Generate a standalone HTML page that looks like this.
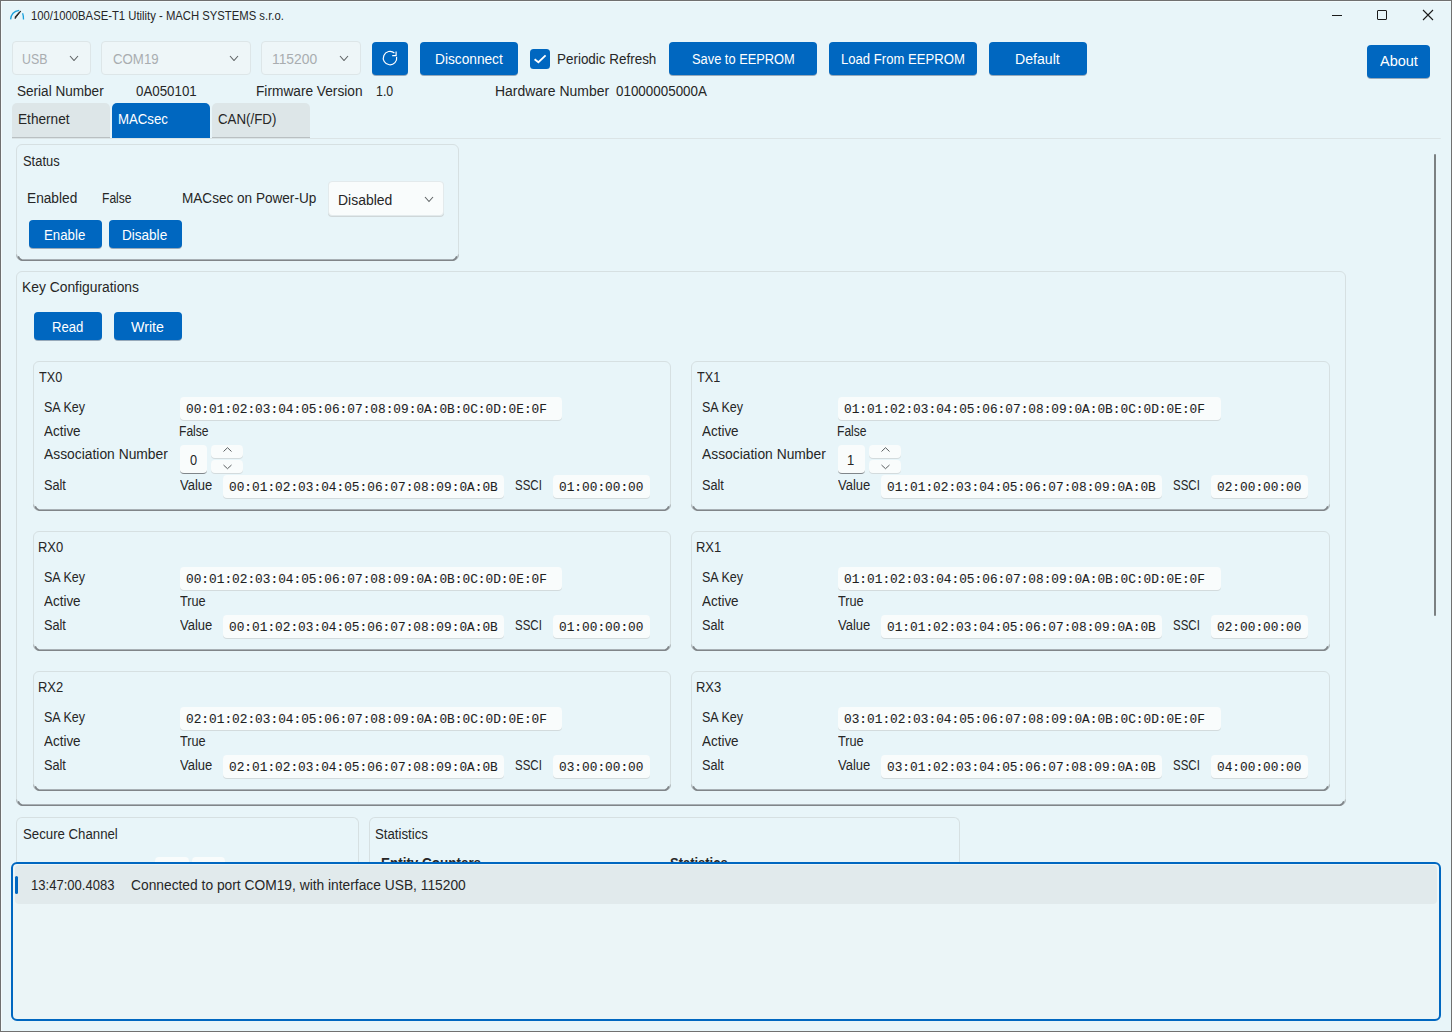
<!DOCTYPE html><html><head><meta charset="utf-8"><style>
*{box-sizing:border-box;margin:0;padding:0}
html,body{width:1452px;height:1032px;overflow:hidden}
body{background:#e8f5f9;font-family:"Liberation Sans",sans-serif;font-size:14px;color:#262626;position:relative}
.a{position:absolute;white-space:nowrap}
.win{position:absolute;left:0;top:0;width:1452px;height:1032px;border:1px solid #707070;box-shadow:inset 1px 1px 0 #f3fbfd}
.t{position:absolute;white-space:nowrap;line-height:16px}
.btn{position:absolute;background:#0067c0;color:#fff;border-radius:4px;box-shadow:0 1px 0 rgba(0,30,70,.35)}
.btn span{position:absolute;left:0;right:0;text-align:center;line-height:16px}
.combo{position:absolute;border:1px solid #dde6e8;border-radius:4px;background:#eef6f8;color:#a0a5a7}
.grp{position:absolute;border:1px solid #d6e0e2;border-radius:6px}
.grp2{position:absolute;border:1px solid #d6e0e2;border-radius:6px;border-bottom:none}
.tb{position:absolute;background:#f9fcfc;border-radius:4px;box-shadow:0 1px 0 #d3dbdd}
.mono{position:absolute;white-space:nowrap;font-family:"Liberation Mono",monospace;font-size:12.8px;line-height:14px;color:#1f1f1f;-webkit-text-stroke:0.1px #1f1f1f}
</style></head><body>
<div class="win"></div>
<svg class="a" style="left:0;top:0" width="30" height="25" viewBox="0 0 30 25">
  <path d="M10.6 19.4 Q11.2 11.4 19.2 10.3" stroke="#1ba1dc" stroke-width="1.35" fill="none"/>
  <path d="M22.6 13.2 Q23.6 15.8 23.5 19.6" stroke="#1ba1dc" stroke-width="1.3" fill="none"/>
  <path d="M15.2 18.6 L16.6 16.6 L20.8 11.2 L19.6 11.8 L15.2 16.8 Z" fill="#1f1f1f" stroke="#1f1f1f" stroke-width="0.9"/>
</svg>
<div class="t" style="left:31.00px;top:7.84px;font-size:12px;transform:scaleX(0.9407);transform-origin:0 0">100/1000BASE-T1 Utility - MACH SYSTEMS s.r.o.</div>
<div class="a" style="left:1332px;top:15px;width:10px;height:1px;background:#1b1b1b"></div>
<div class="a" style="left:1377px;top:10px;width:10px;height:10px;border:1px solid #1b1b1b;border-radius:1px"></div>
<svg class="a" style="left:1422px;top:9px" width="12" height="12" viewBox="0 0 12 12"><path d="M1 1L11 11M11 1L1 11" stroke="#1b1b1b" stroke-width="1.1"/></svg>
<div class="combo" style="left:12px;top:41px;width:79px;height:34px;"></div>
<div class="t" style="left:21.72px;top:51.45px;color:#a9adb0;transform:scaleX(0.8817);transform-origin:0 0">USB</div>
<svg class="a" style="left:69.0px;top:54.8px" width="10" height="6.5"><path d="M1 1 L5.0 5.5 L9 1" stroke="#606466" stroke-width="1.1" fill="none"/></svg>
<div class="combo" style="left:101px;top:41px;width:150px;height:34px;"></div>
<div class="t" style="left:112.50px;top:51.45px;color:#a9adb0;transform:scaleX(0.9453);transform-origin:0 0">COM19</div>
<svg class="a" style="left:229.0px;top:54.8px" width="10" height="6.5"><path d="M1 1 L5.0 5.5 L9 1" stroke="#606466" stroke-width="1.1" fill="none"/></svg>
<div class="combo" style="left:261px;top:41px;width:100px;height:34px;"></div>
<div class="t" style="left:271.81px;top:51.45px;color:#a9adb0;transform:scaleX(0.9890);transform-origin:0 0">115200</div>
<svg class="a" style="left:339.0px;top:54.8px" width="10" height="6.5"><path d="M1 1 L5.0 5.5 L9 1" stroke="#606466" stroke-width="1.1" fill="none"/></svg>
<div class="btn" style="left:372px;top:42px;width:36px;height:33px"></div>
<svg class="a" style="left:380px;top:48px" width="20" height="20" viewBox="0 0 20 20">
<path d="M14.4 5.0 A6.7 6.7 0 1 0 16.6 8.8" stroke="#fff" stroke-width="1.2" fill="none"/>
<path d="M12.2 7.6 L16.1 7.6 L16.1 3.6" stroke="#fff" stroke-width="1.2" fill="none"/></svg>
<div class="btn" style="left:420px;top:42px;width:98px;height:33px"></div>
<div class="t" style="left:434.57px;top:50.65px;color:#fff;transform:scaleX(0.9786);transform-origin:0 0">Disconnect</div>
<div class="a" style="left:530px;top:49px;width:20px;height:20px;background:#0067c0;border-radius:3.5px"></div>
<svg class="a" style="left:530px;top:49px" width="20" height="20"><path d="M4.6 10.2 L8.4 13.2 L15.6 6.4" stroke="#fff" stroke-width="1.8" fill="none"/></svg>
<div class="t" style="left:557.04px;top:51.15px;transform:scaleX(0.9597);transform-origin:0 0">Periodic Refresh</div>
<div class="btn" style="left:669px;top:42px;width:148px;height:33px"></div>
<div class="t" style="left:691.90px;top:50.65px;color:#fff;transform:scaleX(0.9176);transform-origin:0 0">Save to EEPROM</div>
<div class="btn" style="left:829px;top:42px;width:148px;height:33px"></div>
<div class="t" style="left:840.91px;top:50.65px;color:#fff;transform:scaleX(0.9364);transform-origin:0 0">Load From EEPROM</div>
<div class="btn" style="left:989px;top:42px;width:98px;height:33px"></div>
<div class="t" style="left:1015.09px;top:50.65px;color:#fff;transform:scaleX(1.0076);transform-origin:0 0">Default</div>
<div class="btn" style="left:1367px;top:45px;width:63px;height:33px"></div>
<div class="t" style="left:1379.50px;top:53.15px;color:#fff;transform:scaleX(1.0355);transform-origin:0 0">About</div>
<div class="t" style="left:16.50px;top:83.15px;transform:scaleX(0.9687);transform-origin:0 0">Serial Number</div>
<div class="t" style="left:136.10px;top:83.15px;transform:scaleX(0.9508);transform-origin:0 0">0A050101</div>
<div class="t" style="left:255.52px;top:83.15px;transform:scaleX(0.9782);transform-origin:0 0">Firmware Version</div>
<div class="t" style="left:376.32px;top:83.15px;transform:scaleX(0.8835);transform-origin:0 0">1.0</div>
<div class="t" style="left:495.20px;top:83.15px;transform:scaleX(0.9973);transform-origin:0 0">Hardware Number</div>
<div class="t" style="left:616.20px;top:83.15px;transform:scaleX(0.9577);transform-origin:0 0">01000005000A</div>
<div class="a" style="left:12px;top:138px;width:1429px;height:1px;background:#dbe4e6;border-radius:0 3px 0 0"></div>
<div class="a" style="left:12px;top:103px;width:98px;height:35px;background:#dde6e8;border-radius:5px 5px 0 0;border-bottom:1px solid #b9c0c2"></div>
<div class="t" style="left:17.73px;top:111.15px;transform:scaleX(0.9744);transform-origin:0 0">Ethernet</div>
<div class="a" style="left:112px;top:103px;width:98px;height:35px;background:#0067c0;border-radius:5px 5px 0 0"></div>
<div class="t" style="left:117.66px;top:111.15px;color:#fff;transform:scaleX(0.9442);transform-origin:0 0">MACsec</div>
<div class="a" style="left:212px;top:103px;width:98px;height:35px;background:#dde6e8;border-radius:5px 5px 0 0;border-bottom:1px solid #b9c0c2"></div>
<div class="t" style="left:218.40px;top:111.15px;transform:scaleX(0.9494);transform-origin:0 0">CAN(/FD)</div>
<div class="a" style="left:1434px;top:154px;width:2px;height:462px;background:#7b8082;border-radius:1px"></div>
<div class="grp" style="left:16px;top:144px;width:443px;height:117px;"></div>
<svg class="a" style="left:16px;top:252px" width="443" height="9"><path d="M2.22 4.22 A5.6 5.6 0 0 0 6.20 8.20 L436.80 8.20 A5.6 5.6 0 0 0 440.78 4.22" stroke="#80868a" stroke-width="1.6" fill="none"/><path d="M0.6 2.60 A5.6 5.6 0 0 0 6.20 8.20 L436.80 8.20 A5.6 5.6 0 0 0 442.40 2.60" stroke="#80868a" stroke-opacity="0.45" stroke-width="1.2" fill="none"/></svg>
<div class="t" style="left:23.00px;top:153.15px;transform:scaleX(0.9222);transform-origin:0 0">Status</div>
<div class="t" style="left:27.02px;top:190.15px;transform:scaleX(0.9780);transform-origin:0 0">Enabled</div>
<div class="t" style="left:102.14px;top:190.15px;transform:scaleX(0.8640);transform-origin:0 0">False</div>
<div class="t" style="left:182.03px;top:190.15px;transform:scaleX(0.9695);transform-origin:0 0">MACsec on Power-Up</div>
<div class="tb" style="left:328px;top:181px;width:116px;height:35px;background:#f9fcfc;border:1px solid #e3eaec;box-shadow:0 1px 0 #cfd7d9"></div>
<div class="t" style="left:338.00px;top:192.15px;transform:scaleX(0.9964);transform-origin:0 0">Disabled</div>
<svg class="a" style="left:424.0px;top:196.2px" width="10" height="6.5"><path d="M1 1 L5.0 5.5 L9 1" stroke="#606466" stroke-width="1.1" fill="none"/></svg>
<div class="btn" style="left:29px;top:220px;width:73px;height:28px"></div>
<div class="t" style="left:44.30px;top:226.65px;color:#fff;transform:scaleX(0.9461);transform-origin:0 0">Enable</div>
<div class="btn" style="left:109px;top:220px;width:73px;height:28px"></div>
<div class="t" style="left:122.33px;top:226.65px;color:#fff;transform:scaleX(0.9673);transform-origin:0 0">Disable</div>
<div class="grp" style="left:16px;top:271px;width:1330px;height:535px;"></div>
<svg class="a" style="left:16px;top:797px" width="1330" height="9"><path d="M2.22 4.22 A5.6 5.6 0 0 0 6.20 8.20 L1323.80 8.20 A5.6 5.6 0 0 0 1327.78 4.22" stroke="#80868a" stroke-width="1.6" fill="none"/><path d="M0.6 2.60 A5.6 5.6 0 0 0 6.20 8.20 L1323.80 8.20 A5.6 5.6 0 0 0 1329.40 2.60" stroke="#80868a" stroke-opacity="0.45" stroke-width="1.2" fill="none"/></svg>
<div class="t" style="left:22.01px;top:278.65px;transform:scaleX(0.9890);transform-origin:0 0">Key Configurations</div>
<div class="btn" style="left:34px;top:312px;width:68px;height:28px"></div>
<div class="t" style="left:52.21px;top:319.15px;color:#fff;transform:scaleX(0.9374);transform-origin:0 0">Read</div>
<div class="btn" style="left:114px;top:312px;width:68px;height:28px"></div>
<div class="t" style="left:131.45px;top:319.15px;color:#fff;transform:scaleX(1.0146);transform-origin:0 0">Write</div>
<div class="grp" style="left:33px;top:361px;width:638px;height:150px;"></div>
<svg class="a" style="left:33px;top:502px" width="638" height="9"><path d="M2.22 4.22 A5.6 5.6 0 0 0 6.20 8.20 L631.80 8.20 A5.6 5.6 0 0 0 635.78 4.22" stroke="#80868a" stroke-width="1.6" fill="none"/><path d="M0.6 2.60 A5.6 5.6 0 0 0 6.20 8.20 L631.80 8.20 A5.6 5.6 0 0 0 637.40 2.60" stroke="#80868a" stroke-opacity="0.45" stroke-width="1.2" fill="none"/></svg>
<div class="t" style="left:39.00px;top:369.15px;transform:scaleX(0.9038);transform-origin:0 0">TX0</div>
<div class="t" style="left:44.00px;top:399.15px;transform:scaleX(0.8931);transform-origin:0 0">SA Key</div>
<div class="tb" style="left:180px;top:397px;width:382px;height:23px;"></div>
<div class="mono" style="left:186px;top:402.59px">00:01:02:03:04:05:06:07:08:09:0A:0B:0C:0D:0E:0F</div>
<div class="t" style="left:44.00px;top:423.15px;transform:scaleX(0.9599);transform-origin:0 0">Active</div>
<div class="t" style="left:179.14px;top:423.15px;transform:scaleX(0.8640);transform-origin:0 0">False</div>
<div class="t" style="left:44.00px;top:446.15px;transform:scaleX(0.9887);transform-origin:0 0">Association Number</div>
<div class="tb" style="left:180px;top:445px;width:27px;height:29px;border-bottom:1px solid #80868a;box-shadow:none"></div>
<div class="t" style="left:190.00px;top:452.15px;transform:scaleX(0.9125);transform-origin:0 0">0</div>
<div class="tb" style="left:211px;top:445px;width:32px;height:13px;"></div>
<div class="tb" style="left:211px;top:460px;width:32px;height:13px;"></div>
<svg class="a" style="left:222.5px;top:447px" width="9" height="6"><path d="M0.5 4.5 L4.5 0.7 L8.5 4.5" stroke="#5a5e60" stroke-width="1" fill="none"/></svg>
<svg class="a" style="left:222.5px;top:464px" width="9" height="6"><path d="M0.5 1 L4.5 4.7 L8.5 1" stroke="#5a5e60" stroke-width="1" fill="none"/></svg>
<div class="t" style="left:44.00px;top:477.15px;transform:scaleX(0.9078);transform-origin:0 0">Salt</div>
<div class="t" style="left:180.00px;top:477.15px;transform:scaleX(0.9291);transform-origin:0 0">Value</div>
<div class="tb" style="left:223px;top:475px;width:281px;height:23px;"></div>
<div class="mono" style="left:229px;top:480.59px">00:01:02:03:04:05:06:07:08:09:0A:0B</div>
<div class="t" style="left:515.00px;top:477.15px;transform:scaleX(0.8211);transform-origin:0 0">SSCI</div>
<div class="tb" style="left:553px;top:475px;width:97px;height:23px;"></div>
<div class="mono" style="left:559px;top:480.59px">01:00:00:00</div>
<div class="grp" style="left:691px;top:361px;width:639px;height:150px;"></div>
<svg class="a" style="left:691px;top:502px" width="639" height="9"><path d="M2.22 4.22 A5.6 5.6 0 0 0 6.20 8.20 L632.80 8.20 A5.6 5.6 0 0 0 636.78 4.22" stroke="#80868a" stroke-width="1.6" fill="none"/><path d="M0.6 2.60 A5.6 5.6 0 0 0 6.20 8.20 L632.80 8.20 A5.6 5.6 0 0 0 638.40 2.60" stroke="#80868a" stroke-opacity="0.45" stroke-width="1.2" fill="none"/></svg>
<div class="t" style="left:697.00px;top:369.15px;transform:scaleX(0.9038);transform-origin:0 0">TX1</div>
<div class="t" style="left:702.00px;top:399.15px;transform:scaleX(0.8931);transform-origin:0 0">SA Key</div>
<div class="tb" style="left:838px;top:397px;width:383px;height:23px;"></div>
<div class="mono" style="left:844px;top:402.59px">01:01:02:03:04:05:06:07:08:09:0A:0B:0C:0D:0E:0F</div>
<div class="t" style="left:702.00px;top:423.15px;transform:scaleX(0.9599);transform-origin:0 0">Active</div>
<div class="t" style="left:837.14px;top:423.15px;transform:scaleX(0.8640);transform-origin:0 0">False</div>
<div class="t" style="left:702.00px;top:446.15px;transform:scaleX(0.9887);transform-origin:0 0">Association Number</div>
<div class="tb" style="left:838px;top:445px;width:27px;height:29px;border-bottom:1px solid #80868a;box-shadow:none"></div>
<div class="t" style="left:847.07px;top:452.15px;transform:scaleX(0.9286);transform-origin:0 0">1</div>
<div class="tb" style="left:869px;top:445px;width:32px;height:13px;"></div>
<div class="tb" style="left:869px;top:460px;width:32px;height:13px;"></div>
<svg class="a" style="left:880.5px;top:447px" width="9" height="6"><path d="M0.5 4.5 L4.5 0.7 L8.5 4.5" stroke="#5a5e60" stroke-width="1" fill="none"/></svg>
<svg class="a" style="left:880.5px;top:464px" width="9" height="6"><path d="M0.5 1 L4.5 4.7 L8.5 1" stroke="#5a5e60" stroke-width="1" fill="none"/></svg>
<div class="t" style="left:702.00px;top:477.15px;transform:scaleX(0.9078);transform-origin:0 0">Salt</div>
<div class="t" style="left:838.00px;top:477.15px;transform:scaleX(0.9291);transform-origin:0 0">Value</div>
<div class="tb" style="left:881px;top:475px;width:281px;height:23px;"></div>
<div class="mono" style="left:887px;top:480.59px">01:01:02:03:04:05:06:07:08:09:0A:0B</div>
<div class="t" style="left:1173.00px;top:477.15px;transform:scaleX(0.8211);transform-origin:0 0">SSCI</div>
<div class="tb" style="left:1211px;top:475px;width:97px;height:23px;"></div>
<div class="mono" style="left:1217px;top:480.59px">02:00:00:00</div>
<div class="grp" style="left:33px;top:531px;width:638px;height:120px;"></div>
<svg class="a" style="left:33px;top:642px" width="638" height="9"><path d="M2.22 4.22 A5.6 5.6 0 0 0 6.20 8.20 L631.80 8.20 A5.6 5.6 0 0 0 635.78 4.22" stroke="#80868a" stroke-width="1.6" fill="none"/><path d="M0.6 2.60 A5.6 5.6 0 0 0 6.20 8.20 L631.80 8.20 A5.6 5.6 0 0 0 637.40 2.60" stroke="#80868a" stroke-opacity="0.45" stroke-width="1.2" fill="none"/></svg>
<div class="t" style="left:38.07px;top:539.15px;transform:scaleX(0.9263);transform-origin:0 0">RX0</div>
<div class="t" style="left:44.00px;top:569.15px;transform:scaleX(0.8931);transform-origin:0 0">SA Key</div>
<div class="tb" style="left:180px;top:567px;width:382px;height:23px;"></div>
<div class="mono" style="left:186px;top:572.59px">00:01:02:03:04:05:06:07:08:09:0A:0B:0C:0D:0E:0F</div>
<div class="t" style="left:44.00px;top:593.15px;transform:scaleX(0.9599);transform-origin:0 0">Active</div>
<div class="t" style="left:180.00px;top:593.15px;transform:scaleX(0.9094);transform-origin:0 0">True</div>
<div class="t" style="left:44.00px;top:617.15px;transform:scaleX(0.9078);transform-origin:0 0">Salt</div>
<div class="t" style="left:180.00px;top:617.15px;transform:scaleX(0.9291);transform-origin:0 0">Value</div>
<div class="tb" style="left:223px;top:615px;width:281px;height:23px;"></div>
<div class="mono" style="left:229px;top:620.59px">00:01:02:03:04:05:06:07:08:09:0A:0B</div>
<div class="t" style="left:515.00px;top:617.15px;transform:scaleX(0.8211);transform-origin:0 0">SSCI</div>
<div class="tb" style="left:553px;top:615px;width:97px;height:23px;"></div>
<div class="mono" style="left:559px;top:620.59px">01:00:00:00</div>
<div class="grp" style="left:691px;top:531px;width:639px;height:120px;"></div>
<svg class="a" style="left:691px;top:642px" width="639" height="9"><path d="M2.22 4.22 A5.6 5.6 0 0 0 6.20 8.20 L632.80 8.20 A5.6 5.6 0 0 0 636.78 4.22" stroke="#80868a" stroke-width="1.6" fill="none"/><path d="M0.6 2.60 A5.6 5.6 0 0 0 6.20 8.20 L632.80 8.20 A5.6 5.6 0 0 0 638.40 2.60" stroke="#80868a" stroke-opacity="0.45" stroke-width="1.2" fill="none"/></svg>
<div class="t" style="left:696.07px;top:539.15px;transform:scaleX(0.9263);transform-origin:0 0">RX1</div>
<div class="t" style="left:702.00px;top:569.15px;transform:scaleX(0.8931);transform-origin:0 0">SA Key</div>
<div class="tb" style="left:838px;top:567px;width:383px;height:23px;"></div>
<div class="mono" style="left:844px;top:572.59px">01:01:02:03:04:05:06:07:08:09:0A:0B:0C:0D:0E:0F</div>
<div class="t" style="left:702.00px;top:593.15px;transform:scaleX(0.9599);transform-origin:0 0">Active</div>
<div class="t" style="left:838.00px;top:593.15px;transform:scaleX(0.9094);transform-origin:0 0">True</div>
<div class="t" style="left:702.00px;top:617.15px;transform:scaleX(0.9078);transform-origin:0 0">Salt</div>
<div class="t" style="left:838.00px;top:617.15px;transform:scaleX(0.9291);transform-origin:0 0">Value</div>
<div class="tb" style="left:881px;top:615px;width:281px;height:23px;"></div>
<div class="mono" style="left:887px;top:620.59px">01:01:02:03:04:05:06:07:08:09:0A:0B</div>
<div class="t" style="left:1173.00px;top:617.15px;transform:scaleX(0.8211);transform-origin:0 0">SSCI</div>
<div class="tb" style="left:1211px;top:615px;width:97px;height:23px;"></div>
<div class="mono" style="left:1217px;top:620.59px">02:00:00:00</div>
<div class="grp" style="left:33px;top:671px;width:638px;height:120px;"></div>
<svg class="a" style="left:33px;top:782px" width="638" height="9"><path d="M2.22 4.22 A5.6 5.6 0 0 0 6.20 8.20 L631.80 8.20 A5.6 5.6 0 0 0 635.78 4.22" stroke="#80868a" stroke-width="1.6" fill="none"/><path d="M0.6 2.60 A5.6 5.6 0 0 0 6.20 8.20 L631.80 8.20 A5.6 5.6 0 0 0 637.40 2.60" stroke="#80868a" stroke-opacity="0.45" stroke-width="1.2" fill="none"/></svg>
<div class="t" style="left:38.07px;top:679.15px;transform:scaleX(0.9263);transform-origin:0 0">RX2</div>
<div class="t" style="left:44.00px;top:709.15px;transform:scaleX(0.8931);transform-origin:0 0">SA Key</div>
<div class="tb" style="left:180px;top:707px;width:382px;height:23px;"></div>
<div class="mono" style="left:186px;top:712.59px">02:01:02:03:04:05:06:07:08:09:0A:0B:0C:0D:0E:0F</div>
<div class="t" style="left:44.00px;top:733.15px;transform:scaleX(0.9599);transform-origin:0 0">Active</div>
<div class="t" style="left:180.00px;top:733.15px;transform:scaleX(0.9094);transform-origin:0 0">True</div>
<div class="t" style="left:44.00px;top:757.15px;transform:scaleX(0.9078);transform-origin:0 0">Salt</div>
<div class="t" style="left:180.00px;top:757.15px;transform:scaleX(0.9291);transform-origin:0 0">Value</div>
<div class="tb" style="left:223px;top:755px;width:281px;height:23px;"></div>
<div class="mono" style="left:229px;top:760.59px">02:01:02:03:04:05:06:07:08:09:0A:0B</div>
<div class="t" style="left:515.00px;top:757.15px;transform:scaleX(0.8211);transform-origin:0 0">SSCI</div>
<div class="tb" style="left:553px;top:755px;width:97px;height:23px;"></div>
<div class="mono" style="left:559px;top:760.59px">03:00:00:00</div>
<div class="grp" style="left:691px;top:671px;width:639px;height:120px;"></div>
<svg class="a" style="left:691px;top:782px" width="639" height="9"><path d="M2.22 4.22 A5.6 5.6 0 0 0 6.20 8.20 L632.80 8.20 A5.6 5.6 0 0 0 636.78 4.22" stroke="#80868a" stroke-width="1.6" fill="none"/><path d="M0.6 2.60 A5.6 5.6 0 0 0 6.20 8.20 L632.80 8.20 A5.6 5.6 0 0 0 638.40 2.60" stroke="#80868a" stroke-opacity="0.45" stroke-width="1.2" fill="none"/></svg>
<div class="t" style="left:696.07px;top:679.15px;transform:scaleX(0.9263);transform-origin:0 0">RX3</div>
<div class="t" style="left:702.00px;top:709.15px;transform:scaleX(0.8931);transform-origin:0 0">SA Key</div>
<div class="tb" style="left:838px;top:707px;width:383px;height:23px;"></div>
<div class="mono" style="left:844px;top:712.59px">03:01:02:03:04:05:06:07:08:09:0A:0B:0C:0D:0E:0F</div>
<div class="t" style="left:702.00px;top:733.15px;transform:scaleX(0.9599);transform-origin:0 0">Active</div>
<div class="t" style="left:838.00px;top:733.15px;transform:scaleX(0.9094);transform-origin:0 0">True</div>
<div class="t" style="left:702.00px;top:757.15px;transform:scaleX(0.9078);transform-origin:0 0">Salt</div>
<div class="t" style="left:838.00px;top:757.15px;transform:scaleX(0.9291);transform-origin:0 0">Value</div>
<div class="tb" style="left:881px;top:755px;width:281px;height:23px;"></div>
<div class="mono" style="left:887px;top:760.59px">03:01:02:03:04:05:06:07:08:09:0A:0B</div>
<div class="t" style="left:1173.00px;top:757.15px;transform:scaleX(0.8211);transform-origin:0 0">SSCI</div>
<div class="tb" style="left:1211px;top:755px;width:97px;height:23px;"></div>
<div class="mono" style="left:1217px;top:760.59px">04:00:00:00</div>
<div class="grp2" style="left:16px;top:817px;width:343px;height:63px;"></div>
<div class="t" style="left:23.00px;top:826.15px;transform:scaleX(0.9443);transform-origin:0 0">Secure Channel</div>
<div class="tb" style="left:155px;top:857px;width:34px;height:23px;"></div>
<div class="tb" style="left:192px;top:857px;width:33px;height:23px;"></div>
<div class="grp2" style="left:369px;top:817px;width:591px;height:63px;"></div>
<div class="t" style="left:375.00px;top:826.15px;transform:scaleX(0.9444);transform-origin:0 0">Statistics</div>
<div class="t" style="left:381.00px;top:855.15px;font-weight:bold;transform:scaleX(0.9603);transform-origin:0 0">Entity Counters</div>
<div class="t" style="left:670.00px;top:855.15px;font-weight:bold;transform:scaleX(0.9254);transform-origin:0 0">Statistics</div>
<div class="a" style="left:11px;top:862px;width:1430px;height:159px;border:2px solid #0067c0;border-radius:6px;background:#ebf5f7;overflow:hidden"><div class="a" style="left:2px;top:1px;width:1422px;height:39px;background:#e1eaec;border-radius:4px"></div><div class="a" style="left:2px;top:12px;width:3px;height:18px;background:#0067c0;border-radius:2px"></div></div>
<div class="t" style="left:31.07px;top:877.15px;transform:scaleX(0.9319);transform-origin:0 0">13:47:00.4083</div>
<div class="t" style="left:131.00px;top:877.15px;transform:scaleX(0.9852);transform-origin:0 0">Connected to port COM19, with interface USB, 115200</div>
</body></html>
